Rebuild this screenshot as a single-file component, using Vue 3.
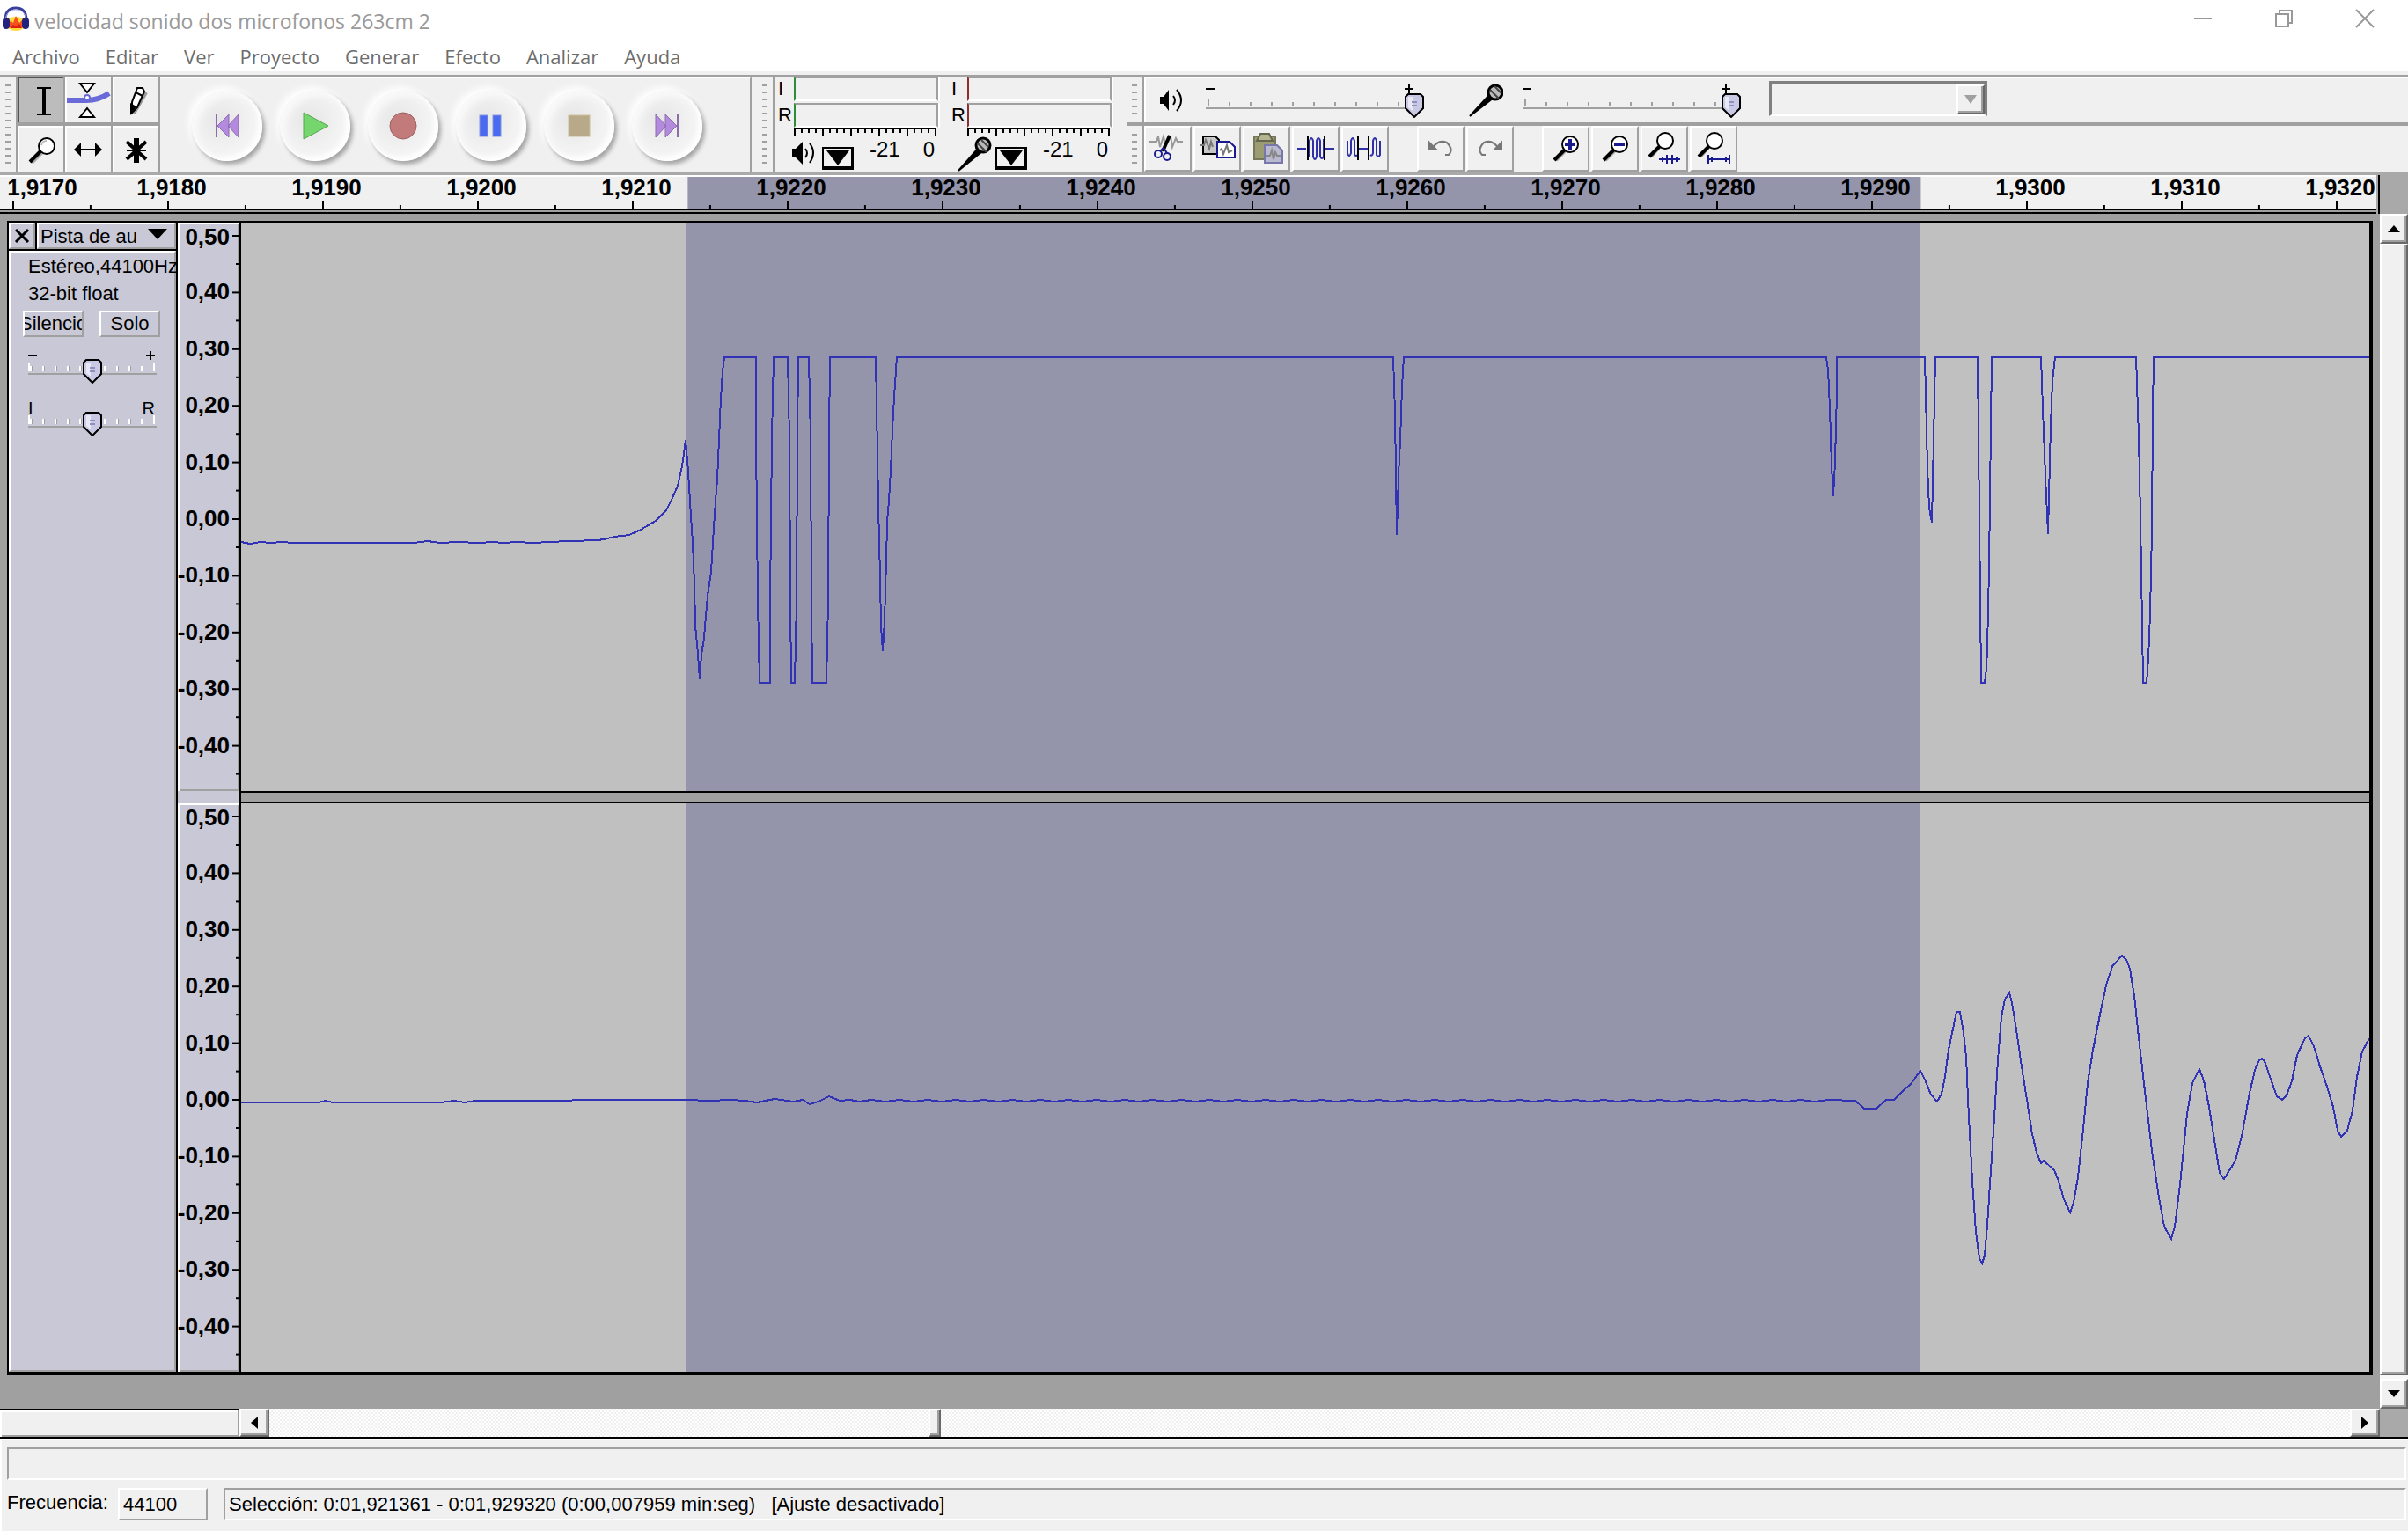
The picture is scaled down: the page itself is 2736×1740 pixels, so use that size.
<script setup>
import { ref } from 'vue'

const menus = ['Archivo', 'Editar', 'Ver', 'Proyecto', 'Generar', 'Efecto', 'Analizar', 'Ayuda']
const tools = [
  { id: 'select', label: 'Selección' },
  { id: 'envelope', label: 'Envolvente' },
  { id: 'draw', label: 'Dibujo' },
  { id: 'zoom', label: 'Zoom' },
  { id: 'shift', label: 'Desplazamiento' },
  { id: 'multi', label: 'Multiherramienta' }
]
const activeTool = ref('select')
const transport = [
  { id: 'start', label: 'Ir al inicio' },
  { id: 'play', label: 'Reproducir' },
  { id: 'record', label: 'Grabar' },
  { id: 'pause', label: 'Pausa' },
  { id: 'stop', label: 'Detener' },
  { id: 'end', label: 'Ir al final' }
]
const meters = [
  { id: 'out', color: '#2e8b3a' },
  { id: 'in', color: '#8b2e2e' }
]
const editGroups = [
  [
    { id: 'cut', label: 'Cortar' },
    { id: 'copy', label: 'Copiar' },
    { id: 'paste', label: 'Pegar' },
    { id: 'trim', label: 'Recortar' },
    { id: 'silence', label: 'Silenciar' }
  ],
  [
    { id: 'undo', label: 'Deshacer' },
    { id: 'redo', label: 'Rehacer' }
  ],
  [
    { id: 'zin', label: 'Acercar' },
    { id: 'zout', label: 'Alejar' },
    { id: 'zsel', label: 'Ajustar selección' },
    { id: 'zfit', label: 'Ajustar proyecto' }
  ]
]

/* Time ruler: ten-thousandths of a second, positions as a share of the ruler */
const rulerWidth = 2702
const pct = (v, total) => (v / total) * 100 + '%'
const times = Array.from({ length: 16 }, (_, i) => {
  const x = 15 + i * 176.13
  return {
    text: '1,9' + (170 + i * 10),
    x: pct(x, rulerWidth),
    mid: pct(x + 88, rulerWidth),
    label: pct(i === 0 ? 48 : x + 4, rulerWidth)
  }
})

/* Amplitude ruler shared by both channels */
const channelHeight = 646
const levels = ['0,50', '0,40', '0,30', '0,20', '0,10', '0,00', '-0,10', '-0,20', '-0,30', '-0,40'].map((text, i) => {
  const y = 15 + i * 64.4
  return { text, y: pct(y, channelHeight), mid: pct(y + 32, channelHeight), label: pct(i === 0 ? y + 2 : y, channelHeight) }
})

const ripple = (from, to, step, base, amp) => {
  const out = []
  for (let x = from, i = 0; x < to; x += step, i++) out.push(x + ',' + (base + (i % 2 ? amp : 0)))
  return out.join(' ')
}
const left =
  '274,616 284,618 296,616 308,617 320,616 334,617 470,617 486,615 500,617 520,616 544,617 560,616 572,617 586,616 606,617 624,616 646,615 680,614 690,612 698,610 715,608 728,602 745,592 757,580 764,566 770,552 775,530 779,500 782,536 784,570 787,617 789,663 790,711 793,743 795,772 797,744 800,725 802,700 804,677 808,650 811,600 813,570 815,545 817,499 819,453 821,422 823,406 ' +
  '859,406 859,498 861,682 863,776 875,776 875,683 877,498 879,406 895,406 897,499 898,682 899,776 903,776 905,683 906,499 907,406 919,406 921,499 922,683 923,776 939,776 941,683 942,499 943,406 ' +
  '995,406 996,461 998,573 1000,657 1001,712 1003,740 1005,706 1007,638 1008,593 1010,569 1012,535 1014,489 1016,451 1018,421 1019,406 1583,406 1585,470 1587,608 1589,540 1591,500 1593,440 1595,406 ' +
  '2075,406 2077,420 2079,463 2081,530 2083,564 2085,525 2087,445 2087,406 2187,406 2188,447 2190,531 2192,577 2195,594 2196,547 2198,453 2199,406 2247,406 2248,499 2250,683 2251,776 2255,776 2257,760 2258,737 2260,645 2262,485 2263,406 ' +
  '2319,406 2320,435 2322,491 2324,541 2326,585 2327,607 2328,565 2330,483 2332,433 2334,415 2335,406 2427,406 2428,435 2430,495 2432,587 2434,712 2435,776 2439,776 2441,749 2443,697 2445,603 2446,471 2447,406 2692,406'
const right =
  '274,1253 362,1253 370,1251 378,1253 500,1253 516,1251 528,1253 540,1251 620,1251 680,1250 780,1250 806,1251 ' +
  '830,1250 846,1251 860,1253 880,1249 902,1252 912,1250 920,1255 930,1252 942,1246 954,1251 966,1250 976,1252 ' +
  ripple(990, 2080, 16, 1250, 2) +
  ' 2086,1250 2100,1251 2108,1251 2118,1260 2132,1260 2143,1250 2152,1250 2163,1239 2171,1232 2182,1217 2187,1227 2194,1244 2201,1252 2206,1243 2210,1224 2214,1193 2218,1174 2223,1150 2227,1150 2231,1174 2234,1201 2237,1270 2241,1342 2245,1400 2249,1430 2252,1436 2255,1427 2258,1392 2261,1346 2266,1270 2270,1205 2274,1155 2278,1136 2283,1128 2286,1140 2291,1170 2297,1212 2303,1250 2309,1289 2314,1310 2319,1322 2322,1319 2334,1330 2339,1342 2345,1363 2352,1378 2356,1367 2361,1338 2366,1293 2372,1231 2378,1193 2386,1153 2393,1120 2400,1098 2411,1086 2416,1091 2420,1101 2425,1132 2429,1170 2436,1231 2445,1308 2453,1361 2459,1394 2467,1408 2471,1394 2477,1346 2485,1266 2491,1231 2499,1215 2504,1228 2510,1258 2518,1308 2522,1333 2527,1340 2540,1319 2548,1287 2555,1247 2562,1216 2567,1205 2570,1203 2573,1206 2581,1229 2587,1246 2593,1250 2598,1245 2604,1229 2610,1199 2619,1180 2623,1177 2629,1189 2636,1212 2644,1235 2651,1258 2656,1285 2660,1292 2667,1285 2673,1262 2678,1224 2684,1195 2692,1180'
const channels = [
  { id: 'left', points: left, shift: 'translate(-274 -253)' },
  { id: 'right', points: right, shift: 'translate(-274 -913)' }
]
</script>

<template>
  <div class="window">
    <header class="titlebar">
      <svg class="logo" width="34" height="30" viewBox="0 0 34 30">
        <ellipse cx="17" cy="21" rx="11" ry="8" fill="#ffd93b" />
        <path d="M8 25l3-8 3 3 3-8 4 8 3-3 3 8z" fill="#f4511e" />
        <path d="M10 26l4-4 3 2 4-3 3 5z" fill="#e01b10" />
        <path d="M5 17C5 7 10 3 17 3s12 4 12 14" fill="none" stroke="#3b3f9c" stroke-width="3" />
        <path d="M5 17C6 9 10 5 17 5s11 4 12 12" fill="none" stroke="#a9b2e6" stroke-width="1" />
        <rect x="2" y="14" width="8" height="13" rx="4" fill="#23237d" />
        <rect x="24" y="14" width="8" height="13" rx="4" fill="#23237d" />
      </svg>
      <h1>velocidad sonido dos microfonos 263cm 2</h1>
      <div class="winbtns">
        <button aria-label="Minimizar"><svg width="22" height="22" viewBox="0 0 22 22"><path d="M1 11h20" /></svg></button>
        <button aria-label="Restaurar"><svg width="22" height="22" viewBox="0 0 22 22"><path d="M2 6h14v14H2zM6 6V2h14v14h-4" /></svg></button>
        <button aria-label="Cerrar"><svg width="22" height="22" viewBox="0 0 22 22"><path d="M1 1l20 20M21 1L1 21" /></svg></button>
      </div>
    </header>

    <nav class="menu">
      <a v-for="m in menus" :key="m" href="#">{{ m }}</a>
    </nav>

    <section class="toolbars">
      <div class="grip"></div>
      <div class="tools">
        <button
          v-for="t in tools"
          :key="t.id"
          :class="{ on: activeTool === t.id }"
          :aria-label="t.label"
          @click="activeTool = t.id"
        >
          <svg width="50" height="50" viewBox="0 0 25 25">
            <g v-if="t.id === 'select'" fill="none" stroke="#000">
              <path d="M10 5.500h3M15 5.500h3M10 20.500h3M15 20.500h3M13 5.500h2M13 20.500h2" />
              <path d="M14 5.500v15" stroke-width="2" />
            </g>
            <g v-else-if="t.id === 'envelope'">
              <path d="M0 12.500h11q7 0 13-4" fill="none" stroke="#6a6ad8" stroke-width="3" />
              <circle cx="11.500" cy="11" r="1.500" fill="#fff" stroke="#6a6ad8" />
              <path d="M7.500 3h8l-4 5zM7.500 22h8l-4-5z" fill="#fff" stroke="#000" />
            </g>
            <g v-else-if="t.id === 'draw'">
              <path d="M11 20l7-12" stroke="#999" stroke-width="2" />
              <path d="M13 5.500h3l1 2-4 9-3 3v-6z" fill="#fff" stroke="#000" />
              <path d="M9 14l3.500 2L9 21z" />
              <path d="M12 8l4 2" stroke="#000" />
            </g>
            <g v-else-if="t.id === 'zoom'">
              <path d="M7 20l6-6" stroke="#aaa" stroke-width="2" />
              <path d="M6 19.500l6-6" stroke="#000" stroke-width="2" />
              <circle cx="15.500" cy="10.500" r="4.500" fill="#fff" stroke="#000" />
              <path d="M12.500 10a3 3 0 0 1 3-2.500" fill="none" stroke="#bbb" />
            </g>
            <g v-else-if="t.id === 'shift'">
              <path d="M7 12.500h10" stroke="#000" />
              <path d="M4 12.500l4-4v8zM20 12.500l-4-4v8z" />
            </g>
            <g v-else stroke="#000" fill="none">
              <path d="M12.500 6v14" stroke-width="3" />
              <path d="M7 13h11" stroke-width="1" />
              <path d="M7 8l11 10M18 8L7 18" stroke-width="2" />
            </g>
          </svg>
        </button>
      </div>

      <div class="transport">
        <button v-for="b in transport" :key="b.id" :aria-label="b.label">
          <svg width="40" height="40" viewBox="0 0 40 40">
            <g v-if="b.id === 'start'" fill="#b48ade" stroke="#8d6cae" stroke-width="1">
              <path d="M8 6v27" stroke-width="2" />
              <path d="M22 7v26L9 20zM33 7v26L21 20z" />
            </g>
            <path v-else-if="b.id === 'play'" d="M7 5l28 15L7 35z" fill="#74d66c" stroke="#5aa653" stroke-width="1" />
            <circle v-else-if="b.id === 'record'" cx="20" cy="20" r="15" fill="#c27a7a" stroke="#9b5f5f" />
            <g v-else-if="b.id === 'pause'" fill="#4a6af0" stroke="#8294dd">
              <rect x="7" y="8" width="9" height="24" /><rect x="22" y="8" width="9" height="24" />
            </g>
            <rect v-else-if="b.id === 'stop'" x="8" y="8" width="24" height="24" fill="#b8a988" stroke="#cdbf9c" />
            <g v-else fill="#b48ade" stroke="#8d6cae" stroke-width="1">
              <path d="M32 6v27" stroke-width="2" />
              <path d="M18 7v26l13-13zM7 7v26l12-13z" />
            </g>
          </svg>
        </button>
      </div>

      <div class="grip"></div>
      <div class="meters">
        <div v-for="m in meters" :key="m.id" class="meter">
          <div class="bars">
            <span>I</span><div class="bar" :style="{ borderLeftColor: m.color }"></div>
            <span>R</span><div class="bar" :style="{ borderLeftColor: m.color }"></div>
          </div>
          <svg class="scale" width="162" height="10" shape-rendering="crispEdges">
            <path d="M0 1h162" stroke="#000" stroke-width="2" />
            <path v-for="i in 21" :key="i" :d="`M${(i - 1) * 8 + 1} 0v${(i - 1) % 4 ? 6 : 10}`" stroke="#000" stroke-width="2" />
          </svg>
          <div class="foot">
            <svg v-if="m.id === 'out'" width="40" height="40" viewBox="0 0 20 20">
              <path d="M5 7h2l4-4v13l-4-4H5z" /><path d="M12.500 7q2 2.500 0 5M15 4q4 5 0 11" fill="none" stroke="#000" />
            </svg>
            <svg v-else width="40" height="40" viewBox="0 0 20 20">
              <path d="M1 19.500L12 7l2 2z" stroke="#000" /><circle cx="15" cy="5" r="4" fill="#bbb" stroke="#000" stroke-width="1.500" /><path d="M12 4l5 5M14 2l4 4" stroke="#444" />
            </svg>
            <button class="drop" aria-label="Opciones del medidor"><svg width="26" height="18" viewBox="0 0 26 18"><path d="M0 1h26L13 18z" /></svg></button>
            <span class="db">-21</span><span class="zero">0</span>
          </div>
        </div>
      </div>

      <div class="rightbars">
        <div class="barrow">
          <div class="grip"></div>
          <div class="mixer">
            <svg width="40" height="40" viewBox="0 0 20 20">
              <path d="M4 8h2l3-4v12l-3-4H4z" /><path d="M11.500 7.500q2 2.500 0 5M13.500 4q5 6 0 12" fill="none" stroke="#000" />
            </svg>
            <div class="vol">
              <div class="signs"><i class="minus"></i><i class="plus"></i></div>
              <input type="range" value="100" aria-label="Volumen de salida" />
            </div>
            <svg width="40" height="40" viewBox="0 0 20 20">
              <path d="M1 19L12 7l2 2z" stroke="#000" /><circle cx="15.500" cy="5.500" r="4" fill="#bbb" stroke="#000" stroke-width="1.500" /><path d="M12.500 4l5 5M15 2l4 4" stroke="#444" />
            </svg>
            <div class="vol">
              <div class="signs"><i class="minus"></i><i class="plus"></i></div>
              <input type="range" value="100" aria-label="Volumen de entrada" />
            </div>
            <div class="combo"><select aria-label="Dispositivo de entrada" disabled></select><b><svg width="14" height="10"><path d="M0 0h14L7 10z" fill="#a0a0a0" /></svg></b></div>
          </div>
        </div>
        <div class="barrow">
          <div class="grip"></div>
          <div class="edit">
            <div v-for="(g, gi) in editGroups" :key="gi" class="group">
              <button v-for="b in g" :key="b.id" :aria-label="b.label">
                <svg width="50" height="50" viewBox="0 0 25 25" fill="none">
                  <g v-if="b.id === 'cut'">
                    <path d="M2 8.500h4l1-3 1 6 2-6 1 5 3-5 1 6 2-5 1 2h3" stroke="#999" />
                    <path d="M13.500 5l-4 9" stroke="#000" stroke-width="2" />
                    <circle cx="7" cy="15.500" r="2" stroke="#1a1a90" /><circle cx="12" cy="17" r="2" stroke="#1a1a90" />
                    <path d="M8 14l2-2M12 15l-2-3" stroke="#1a1a90" />
                  </g>
                  <g v-else-if="b.id === 'copy'">
                    <path d="M4.500 5.500h7l2 2v8h-9z" fill="#c8c8c8" stroke="#000" /><path d="M3 10.500h2l1-3 2 5 1-4 1 3" stroke="#777" />
                    <path d="M12.500 8.500h7l3 3v6h-10z" fill="#fff" stroke="#1a1a90" /><path d="M14 13.500l1-1 1 3 2-5 1 4 2-1" stroke="#777" />
                  </g>
                  <g v-else-if="b.id === 'paste'">
                    <path d="M5.500 5.500h12v13h-12z" fill="#9c9c72" stroke="#77775a" /><path d="M7 8h9l-2-4H9z" fill="#b5b58f" stroke="#666650" />
                    <path d="M11.500 10.500h7l3 3v7h-10z" fill="#b9b9cf" stroke="#7777ac" /><path d="M12.500 16.500h2l1-3 1 5 1-4 1 2h2" stroke="#888" />
                  </g>
                  <g v-else-if="b.id === 'trim'" stroke="#3030a8">
                    <path d="M2 12.500h5M18 12.500h5" /><path d="M9 17V8q1-3 2 0v9q1 3 2 0V8q1-3 2 0v9q1 2 2 0V7" />
                    <path d="M8 5v14M17.500 5v14" stroke="#000" />
                  </g>
                  <g v-else-if="b.id === 'silence'" stroke="#3030a8">
                    <path d="M2.500 8v7q1 3 2 0V8q1-3 2 0v8q1 1 1.500 0M8.500 12.500h6M15.500 16q1 1 1.500-1V8q1-3 2 0v8q1 2 2 0V8" />
                    <path d="M8.500 5v14M14.500 5v14" stroke="#000" />
                  </g>
                  <g v-else-if="b.id === 'undo'" stroke="#777">
                    <path d="M8 12q3-5 8-3 4 4 1 7h-2" /><path d="M6 9v4h4z" fill="#777" />
                  </g>
                  <g v-else-if="b.id === 'redo'" stroke="#777">
                    <path d="M17 12q-3-5-8-3-4 4-1 7h2" /><path d="M19 9v4h-4z" fill="#777" />
                  </g>
                  <g v-else-if="b.id === 'zin' || b.id === 'zout'">
                    <path d="M7 19l6-6" stroke="#aaa" stroke-width="2" />
                    <path d="M6 19l6-6" stroke="#000" stroke-width="2" />
                    <circle cx="15" cy="10" r="4.500" fill="#fff" stroke="#000" />
                    <path d="M12 10h6" stroke="#1a1a90" stroke-width="2" />
                    <path v-if="b.id === 'zin'" d="M15 7v6" stroke="#1a1a90" stroke-width="2" />
                  </g>
                  <g v-else>
                    <path d="M5 17l6-7" stroke="#aaa" stroke-width="2" />
                    <path d="M4 17l6-6" stroke="#000" stroke-width="2" />
                    <circle cx="13" cy="8" r="4.500" fill="#fff" stroke="#000" />
                    <path v-if="b.id === 'zsel'" d="M9.500 18.500h12M14 16v5M17 16v5M11.500 17v3M19.500 17v3" stroke="#1a1a90" />
                    <path v-else d="M9.500 18.500h12M9.500 16v5M21.500 16v5M11.500 17v3M19.500 17v3" stroke="#1a1a90" />
                  </g>
                </svg>
              </button>
            </div>
          </div>
        </div>
      </div>
    </section>

    <div class="rulerrow">
      <svg class="ruler" width="100%" height="38">
        <rect width="100%" height="38" fill="#f0f0f0" />
        <rect width="100%" height="2" fill="#fff" />
        <rect x="28.94%" y="2" width="51.89%" height="36" fill="#9494aa" />
        <g v-for="t in times" :key="t.text">
          <svg :x="t.x" overflow="visible"><path d="M-1 30h2v8h-2z" /></svg>
          <svg :x="t.mid" overflow="visible"><path d="M-1 34h2v4h-2z" /></svg>
          <text :x="t.label" y="23" text-anchor="middle">{{ t.text }}</text>
        </g>
      </svg>
    </div>

    <main class="work">
      <div class="tracks">
        <article class="track">
          <aside class="panel">
            <div class="phead">
              <button class="close" aria-label="Cerrar pista"><svg width="18" height="16"><path d="M2 1l14 14M16 1L2 15" stroke="#000" stroke-width="3" /></svg></button>
              <button class="name"><span>Pista de au</span><svg width="22" height="12"><path d="M0 0h22L11 12z" /></svg></button>
            </div>
            <div class="pbody">
              <p>Estéreo,44100Hz</p>
              <p>32-bit float</p>
              <div class="ms"><button><span>Silencio</span></button><button><span>Solo</span></button></div>
              <div class="gain">
                <div class="signs"><i class="minus"></i><i class="plus"></i></div>
                <input type="range" value="50" aria-label="Ganancia" />
              </div>
              <div class="gain">
                <div class="signs letters"><span>I</span><span>R</span></div>
                <input type="range" value="50" aria-label="Panorama" />
              </div>
            </div>
          </aside>
          <div class="vrulers">
            <div v-for="c in channels" :key="c.id" class="vruler">
              <svg width="70" height="100%">
                <g v-for="l in levels" :key="l.text">
                  <svg :y="l.y" overflow="visible"><path d="M62-1h8v2h-8z" /></svg>
                  <svg :y="l.mid" overflow="visible"><path d="M66-1h4v2h-4z" /></svg>
                  <text x="59" :y="l.label" dy="8" text-anchor="end">{{ l.text }}</text>
                </g>
              </svg>
            </div>
          </div>
          <div class="waves">
            <div v-for="c in channels" :key="c.id" class="wave">
              <svg width="100%" height="100%" viewBox="0 0 2418 646" preserveAspectRatio="none" shape-rendering="crispEdges">
                <rect x="506" width="1402" height="646" fill="#9494aa" />
                <polyline :points="c.points" :transform="c.shift" fill="none" stroke="#3232b4" stroke-width="2" vector-effect="non-scaling-stroke" />
              </svg>
            </div>
          </div>
        </article>
      </div>
      <div class="vscroll">
        <button aria-label="Arriba"><svg width="14" height="8"><path d="M7 0l7 8H0z" /></svg></button>
        <div class="thumb"></div>
        <button aria-label="Abajo"><svg width="14" height="8"><path d="M0 0h14L7 8z" /></svg></button>
      </div>
    </main>

    <div class="hscroll">
      <div class="stub"></div>
      <button aria-label="Izquierda"><svg width="8" height="14"><path d="M8 0v14L0 7z" /></svg></button>
      <div class="trough"><div class="hthumb"></div></div>
      <button aria-label="Derecha"><svg width="8" height="14"><path d="M0 0v14l8-7z" /></svg></button>
      <div class="corner"></div>
    </div>

    <footer class="status">
      <div class="msg"></div>
      <div class="info">
        <span class="lbl">Frecuencia:</span>
        <button class="rate">44100</button>
        <div class="sel">Selección: 0:01,921361 - 0:01,929320 (0:00,007959 min:seg) &nbsp; [Ajuste desactivado]</div>
      </div>
    </footer>
  </div>
</template>

<style>
body {
  margin: 0;
}
</style>

<style scoped>
* {
  box-sizing: border-box;
}
.window {
  display: flex;
  flex-direction: column;
  min-height: 100vh;
  background: #f0f0f0;
  font-family: "Liberation Sans", Arial, sans-serif;
  font-size: 22px;
  color: #000;
}
button {
  display: flex;
  align-items: center;
  justify-content: center;
  padding: 0;
  margin: 0;
  border: 0;
  background: none;
  font: inherit;
  color: inherit;
}
svg {
  display: block;
  flex: none;
}
.titlebar {
  display: flex;
  align-items: center;
  height: 48px;
  background: #fff;
}
.logo {
  margin: 0 4px 6px 1px;
}
h1 {
  flex: 1;
  margin: 0;
  font: 400 23px/46px "Open Sans", "Noto Sans", sans-serif;
  color: #999;
}
.winbtns {
  display: flex;
  gap: 70px;
  padding: 0 38px 6px 0;
}
.winbtns path {
  fill: none;
  stroke: #999;
  stroke-width: 2;
}
.menu {
  display: flex;
  gap: 29px;
  height: 33px;
  padding-left: 14px;
  background: #fff;
}
.menu a {
  font: 400 22px/32px "Open Sans", "Noto Sans", sans-serif;
  color: #6d6d6d;
  text-decoration: none;
}
.toolbars {
  display: flex;
  margin-top: 4px;
  border-top: 2px solid #a0a0a0;
  border-bottom: 4px solid #a9a9a9;
  height: 114px;
}
.grip {
  width: 20px;
  border-right: 2px solid #a0a0a0;
  background: repeating-linear-gradient(#f0f0f0 0 5px, #a0a0a0 5px 7px, #f0f0f0 7px 8px) 6px 4px / 6px 96px no-repeat;
  flex: none;
}
.tools {
  display: grid;
  grid-template-columns: repeat(3, 54px);
  grid-template-rows: 52px 52px;
  row-gap: 4px;
  background: #a0a0a0;
}
.tools button {
  border: 2px solid #fff;
  border-width: 2px 0 0 2px;
  margin-right: 2px;
  background: #f0f0f0;
}
.tools .on {
  background: #bcbcbc;
  border-color: #555;
}
.transport {
  display: flex;
  align-items: center;
  gap: 20px;
  width: 672px;
  flex: none;
  margin-right: 6px;
  padding: 2px 0 0 36px;
  border-top: 2px solid #fff;
  border-right: 2px solid #a0a0a0;
}
.transport button {
  width: 80px;
  height: 80px;
  border-radius: 50%;
  background: radial-gradient(circle at 42% 42%, #e6e6e6, #f2f2f2 50%, #fafafa);
  box-shadow: 3px 4px 5px #a4a4a4, -4px -4px 8px #fff, inset -4px -4px 6px #fff, inset 5px 5px 8px #fafafa;
}
.meters {
  display: flex;
  gap: 31px;
  width: 400px;
  padding-left: 4px;
  flex: none;
}
.meter {
  width: 166px;
  flex: none;
}
.bars {
  display: grid;
  grid-template-columns: 18px 164px;
  grid-template-rows: 28px 28px;
  row-gap: 2px;
  line-height: 28px;
}
.bar {
  border-left: 2px solid;
  border-top: 2px solid #a0a0a0;
  border-right: 2px solid #a0a0a0;
  border-bottom: 2px solid #fff;
  box-shadow: 2px 0 #fff;
}
.scale {
  margin-left: 18px;
}
.foot {
  display: flex;
  width: 190px;
}
.foot > svg {
  margin: 0 4px 0 6px;
}
.drop {
  width: 36px;
  height: 26px;
  margin-top: 12px;
  border: 2px solid #000;
  border-bottom-width: 4px;
  border-right-width: 3px;
}
.foot span {
  line-height: 30px;
  font-size: 24px;
}
.db {
  margin-left: 18px;
}
.zero {
  margin-left: 26px;
}
.rightbars {
  flex: 1;
  display: flex;
  flex-direction: column;
  gap: 4px;
  background: #a0a0a0;
}
.barrow {
  display: flex;
  height: 52px;
  background: #f0f0f0;
}
.barrow .grip {
  background-size: 6px 44px;
}
.mixer {
  flex: 1;
  display: flex;
  align-items: center;
  padding-left: 8px;
  border-top: 2px solid #fff;
  border-left: 2px solid #fff;
}
.vol {
  width: 248px;
  height: 44px;
  margin: 0 50px 0 20px;
}
.vol + svg + .vol {
  margin: 0 32px 0 22px;
}
.signs {
  display: flex;
  justify-content: space-between;
  align-items: center;
  height: 14px;
}
.vol .signs {
  padding: 4px 12px 0 0;
}
.minus,
.plus {
  width: 10px;
  height: 10px;
  background: linear-gradient(#000 0 0) center / 10px 2px no-repeat;
}
.plus {
  background: linear-gradient(#000 0 0) center / 10px 2px no-repeat, linear-gradient(#000 0 0) center / 2px 10px no-repeat;
}
input[type="range"] {
  -webkit-appearance: none;
  appearance: none;
  display: block;
  margin: 0;
  width: 100%;
  height: 28px;
  background: linear-gradient(#a0a0a0 0 0) 0 16px / 100% 2px no-repeat,
    linear-gradient(#a0a0a0 0 0) 2px 6px / 2px 8px no-repeat,
    repeating-linear-gradient(90deg, #a0a0a0 0 2px, transparent 2px 24px) 2px 10px / 220px 4px no-repeat;
}
input[type="range"]::-webkit-slider-thumb {
  -webkit-appearance: none;
  width: 22px;
  height: 28px;
  background: url("data:image/svg+xml,%3Csvg xmlns='http://www.w3.org/2000/svg' viewBox='0 0 22 28'%3E%3Cpath d='M4 1h14l3 3v13l-10 10L1 17V4z' fill='%23c9c9e6' stroke='%23000' stroke-width='2'/%3E%3Cpath d='M4 16V4h5v16z' fill='%23fff' opacity='.6'/%3E%3Cpath d='M8 10h6M8 14h6' stroke='%238f8fc0' stroke-width='2'/%3E%3C/svg%3E");
}
.combo {
  display: flex;
  width: 248px;
  height: 40px;
  margin-bottom: 4px;
  border: 4px solid #696969;
  border-color: #808080 #808080 #fff #808080;
  border-width: 4px 3px 2px 3px;
}
.combo select {
  -webkit-appearance: none;
  appearance: none;
  flex: 1;
  border: 0;
  background: #f0f0f0;
}
.combo b,
.vscroll button,
.hscroll button,
.thumb,
.hthumb {
  display: flex;
  align-items: center;
  justify-content: center;
  width: 32px;
  background: #f0f0f0;
  border: 2px solid #fff;
  border-right-color: #696969;
  border-bottom-color: #696969;
  box-shadow: inset -2px -2px #a0a0a0;
}
.edit {
  display: flex;
  gap: 32px;
}
.group {
  display: flex;
  gap: 2px;
}
.edit button {
  width: 54px;
  border: 2px solid #fff;
  border-right-color: #a0a0a0;
  border-bottom-color: #a0a0a0;
}
.rulerrow {
  display: flex;
  height: 44px;
  background: #a9a9a9;
}
.ruler {
  flex: 1;
  overflow: hidden;
  box-shadow: 0 2px #000, 0 4px #a0a0a0, 0 6px #000;
}
.rulerrow::after {
  content: "";
  width: 32px;
  margin-left: 2px;
  border-left: 2px solid #000;
}
.ruler text,
.vruler text {
  font: 700 26px "Liberation Sans", Arial, sans-serif;
}
.work {
  flex: 1;
  display: flex;
  background: #a0a0a0;
}
.tracks {
  flex: 1;
  display: flex;
  padding: 8px 8px 38px;
}
.track {
  flex: 1;
  display: flex;
  border: 2px solid #000;
  border-right-width: 4px;
  border-bottom-width: 4px;
}
.panel {
  width: 192px;
  display: flex;
  flex-direction: column;
  border-right: 2px solid #000;
  background: #c8c8d7;
}
.phead {
  display: flex;
  height: 32px;
  border-bottom: 2px solid #000;
}
.close,
.name {
  border: 2px solid #fff;
  border-right-color: #a0a0a0;
  border-bottom-color: #a0a0a0;
}
.close {
  width: 30px;
}
.name {
  flex: 1;
  justify-content: space-between;
  padding: 2px 8px 0 2px;
  box-shadow: -2px 0 #000;
  margin-left: 2px;
}
.name svg {
  margin-bottom: 6px;
}
.pbody {
  flex: 1;
  padding: 0 16px 0 20px;
  border: 2px solid #fff;
  border-right-color: #a0a0a0;
  border-bottom-color: #a0a0a0;
}
.pbody p {
  margin: 0;
  line-height: 31px;
  white-space: nowrap;
}
.ms {
  display: flex;
  gap: 18px;
  margin: 4px 0 0 -6px;
}
.ms button {
  width: 70px;
  height: 30px;
  overflow: hidden;
  border: 2px solid #fff;
  border-right-color: #a0a0a0;
  border-bottom-color: #a0a0a0;
}
.gain {
  width: 146px;
  margin-top: 14px;
  height: 46px;
}
.gain .signs {
  padding-right: 2px;
}
.gain .letters {
  font-size: 20px;
  line-height: 14px;
}
.gain input {
  margin-top: -3px;
  background: linear-gradient(#a0a0a0 0 0) 0 16px / 100% 2px no-repeat,
    linear-gradient(#fff 0 0) 0 4px / 2px 10px no-repeat,
    linear-gradient(#fff 0 0) 142px 4px / 2px 10px no-repeat,
    repeating-linear-gradient(90deg, #fff 0 2px, #a0a0a0 2px 3px, transparent 3px 14px) 2px 8px / 140px 6px no-repeat;
}
.vrulers {
  width: 72px;
  display: flex;
  flex-direction: column;
  gap: 14px;
  background: #c8c8d7;
  border-right: 2px solid #000;
}
.vruler {
  flex: 1;
  position: relative;
  box-shadow: inset 2px 2px #fff, inset -2px -2px #a0a0a0;
}
.vruler > svg {
  position: absolute;
}
.waves {
  flex: 1;
  display: flex;
  flex-direction: column;
  gap: 10px;
  background: #a0a0a0;
}
.wave {
  flex: 1;
  position: relative;
  background: #c0c0c0;
}
.wave:first-child {
  border-bottom: 2px solid #000;
}
.wave:last-child {
  border-top: 2px solid #000;
}
.wave svg {
  position: absolute;
}
.vscroll {
  width: 32px;
  display: flex;
  flex-direction: column;
  background: #f8f8f8;
}
.vscroll button {
  height: 34px;
}
.thumb {
  flex: 1;
  margin-bottom: 4px;
}
.hscroll {
  display: flex;
  height: 32px;
}
.stub {
  width: 272px;
  border-top: 2px solid #000;
  border-right: 2px solid #a0a0a0;
  box-shadow: inset 2px 2px #fff, inset 0 -2px #a0a0a0;
}
.hscroll button {
  width: 34px;
}
.trough {
  flex: 1;
  background: repeating-conic-gradient(#fff 0 25%, #f0f0f0 0 50%) 0 0 / 4px 4px;
}
.hthumb {
  width: 14px;
  height: 100%;
  margin-left: 749px;
}
.corner {
  width: 32px;
  background: #a9a9a9;
}
.status {
  border-top: 2px solid #000;
  box-shadow: inset 0 2px #fff, inset 2px 0 #fff;
  padding: 10px 2px 12px 8px;
}
.msg,
.sel {
  height: 37px;
  border: 2px solid #a0a0a0;
  border-right-color: #fff;
  border-bottom-color: #fff;
}
.info {
  display: flex;
  margin-top: 9px;
  line-height: 33px;
}
.lbl {
  width: 126px;
}
.rate {
  width: 102px;
  height: 37px;
  padding-left: 4px;
  justify-content: flex-start;
  border: 2px solid #fff;
  border-right-color: #a0a0a0;
  border-bottom-color: #a0a0a0;
}
.sel {
  flex: 1;
  margin-left: 18px;
  padding-left: 4px;
  white-space: nowrap;
}
</style>
